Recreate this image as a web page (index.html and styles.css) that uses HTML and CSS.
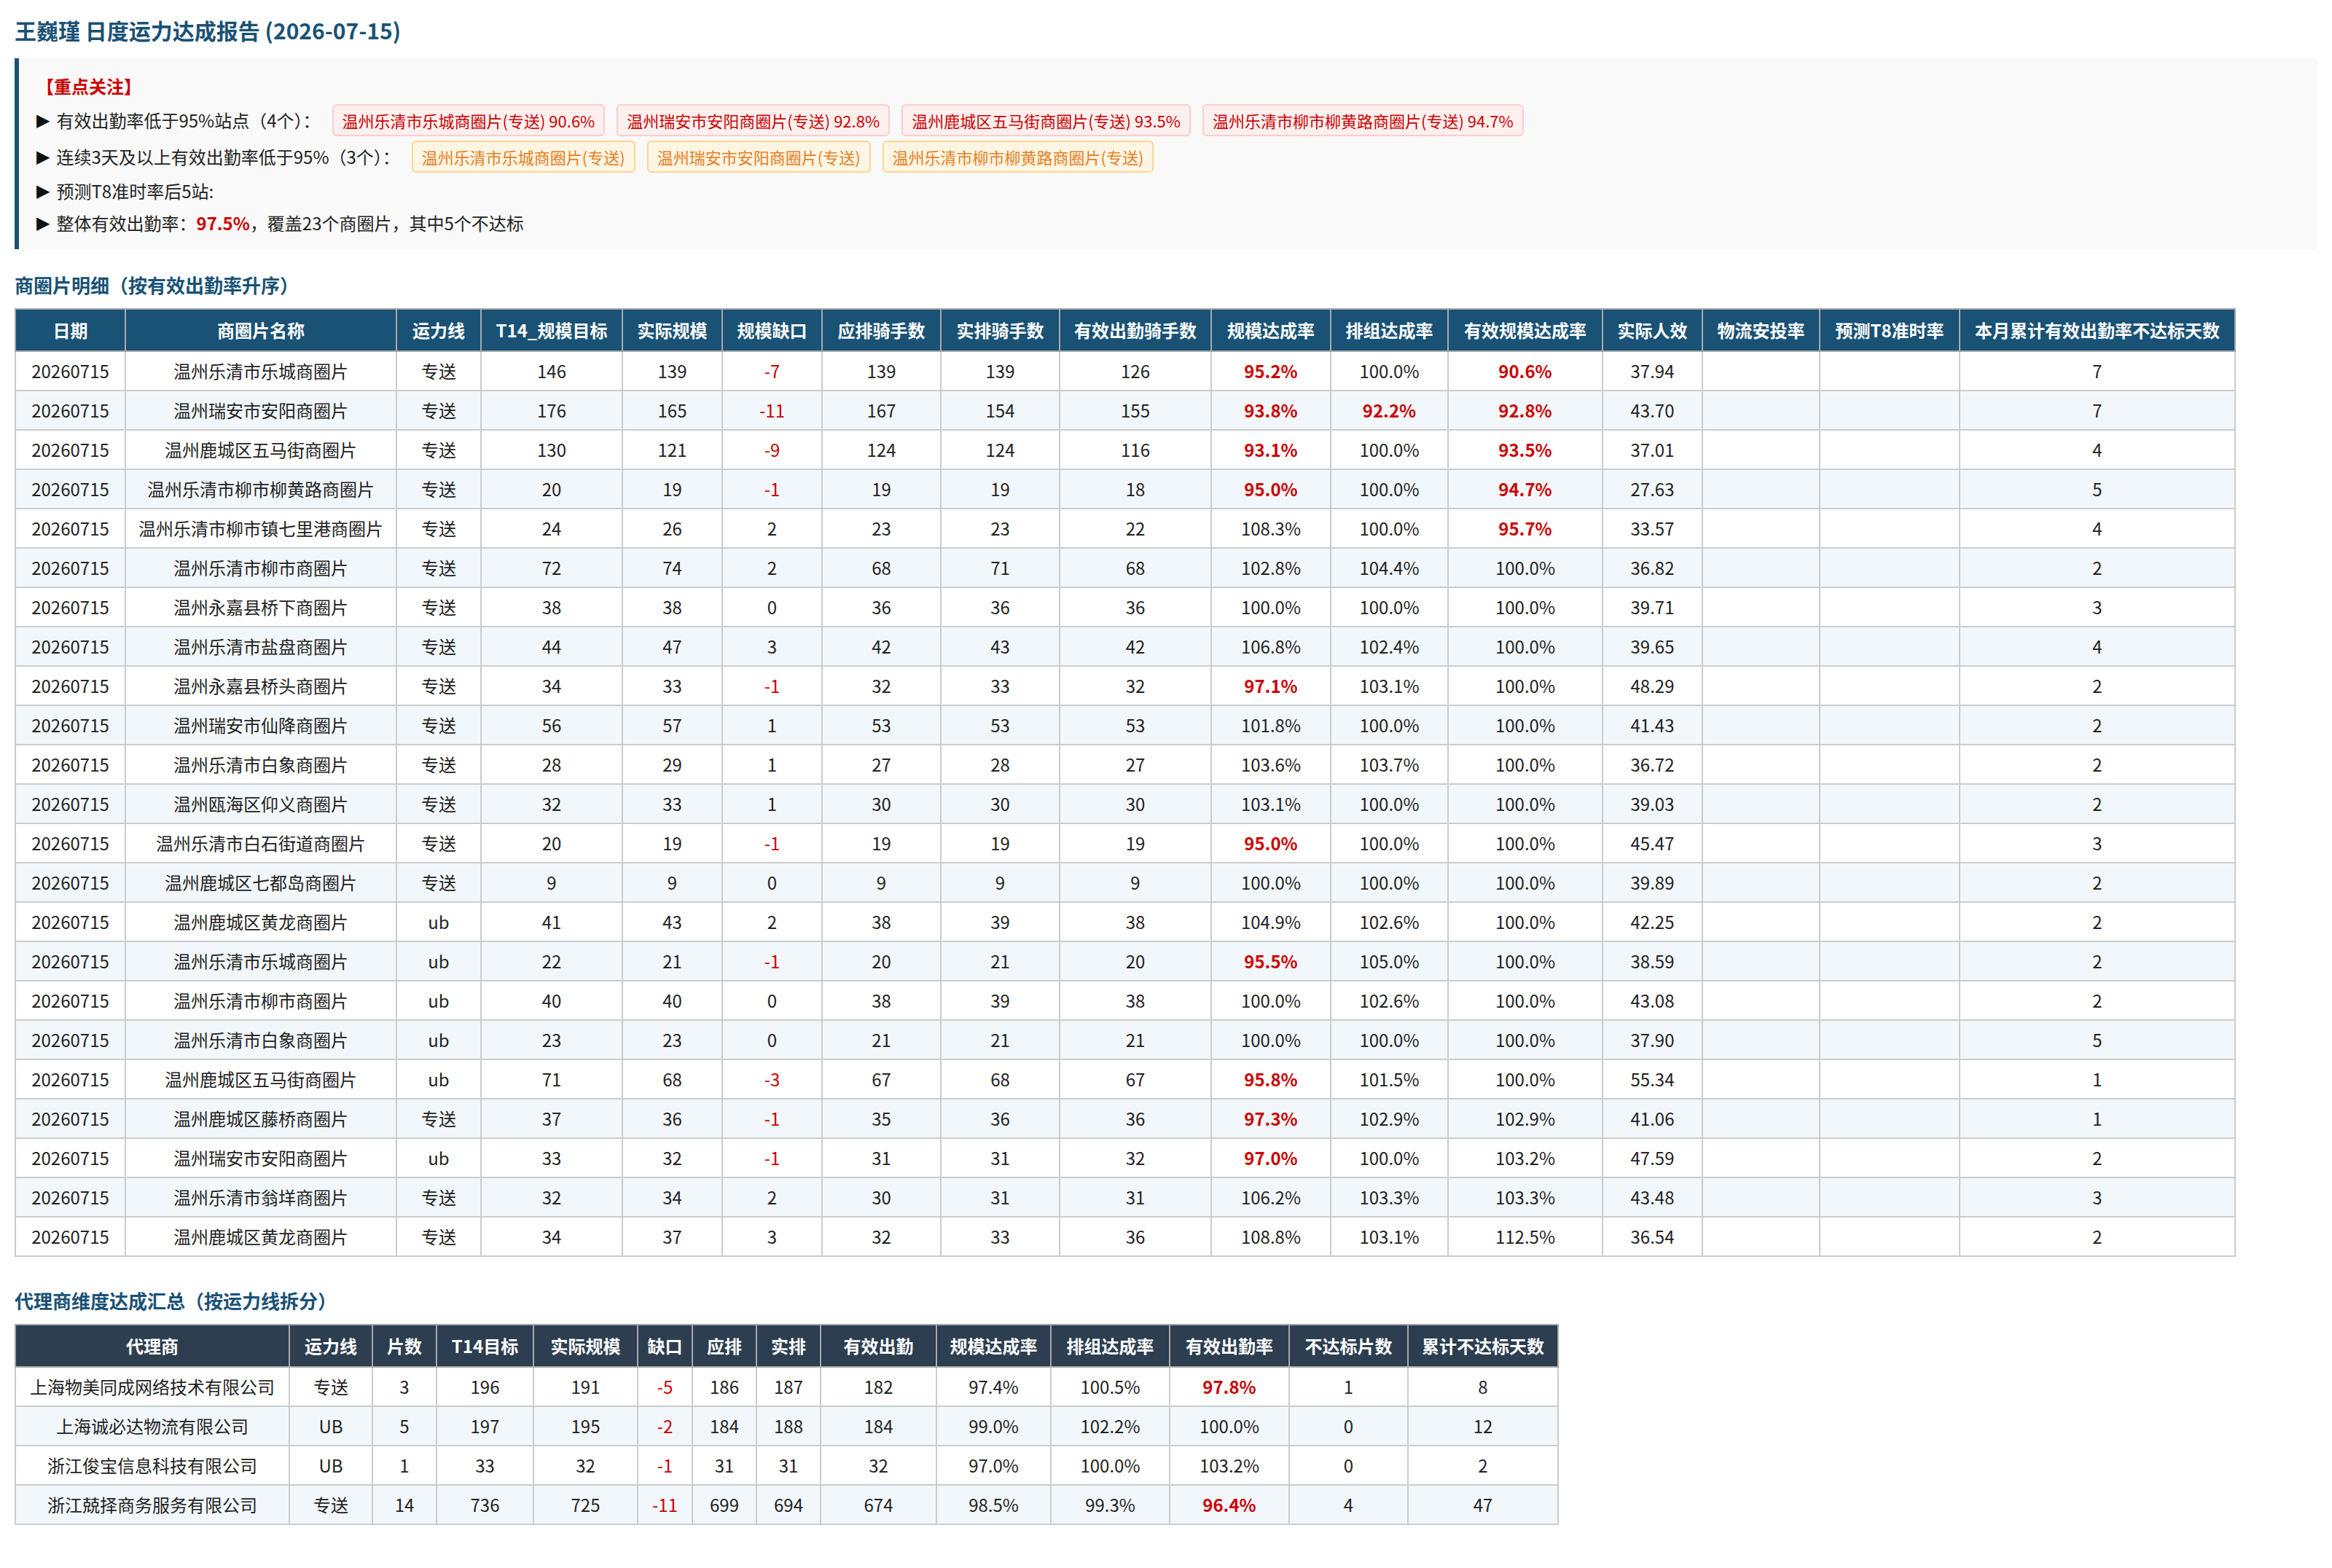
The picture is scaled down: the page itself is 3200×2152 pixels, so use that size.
FILE: index.html
```html
<!DOCTYPE html>
<html lang="zh-CN">
<head>
<meta charset="utf-8">
<title>王巍瑾 日度运力达成报告</title>
<link rel="stylesheet" href="styles.css">
</head>
<body>
<h1 class="title">王巍瑾 日度运力达成报告 (2026-07-15)</h1>

<div class="keybox">
  <div class="key-head">【重点关注】</div>
  <div class="key-line"><span class="arrow">▶</span><span class="label">有效出勤率低于95%站点（4个）：</span><span class="badge red">温州乐清市乐城商圈片(专送) 90.6%</span><span class="badge red">温州瑞安市安阳商圈片(专送) 92.8%</span><span class="badge red">温州鹿城区五马街商圈片(专送) 93.5%</span><span class="badge red">温州乐清市柳市柳黄路商圈片(专送) 94.7%</span></div>
  <div class="key-line"><span class="arrow">▶</span><span class="label">连续3天及以上有效出勤率低于95%（3个）：</span><span class="badge orange">温州乐清市乐城商圈片(专送)</span><span class="badge orange">温州瑞安市安阳商圈片(专送)</span><span class="badge orange">温州乐清市柳市柳黄路商圈片(专送)</span></div>
  <div class="key-line"><span class="arrow">▶</span><span class="label">预测T8准时率后5站:</span></div>
  <div class="key-line"><span class="arrow">▶</span><span class="label">整体有效出勤率：<b class="hl">97.5%</b>，覆盖23个商圈片，其中5个不达标</span></div>
</div>

<h2 class="section">商圈片明细（按有效出勤率升序）</h2>
<table class="grid detail">
  <colgroup>
    <col><col><col><col><col><col><col><col><col><col><col><col><col><col><col><col>
  </colgroup>
  <thead>
    <tr><th>日期</th><th>商圈片名称</th><th>运力线</th><th>T14_规模目标</th><th>实际规模</th><th>规模缺口</th><th>应排骑手数</th><th>实排骑手数</th><th>有效出勤骑手数</th><th>规模达成率</th><th>排组达成率</th><th>有效规模达成率</th><th>实际人效</th><th>物流安投率</th><th>预测T8准时率</th><th>本月累计有效出勤率不达标天数</th></tr>
  </thead>
  <tbody>
    <tr><td>20260715</td><td>温州乐清市乐城商圈片</td><td>专送</td><td>146</td><td>139</td><td class="neg">-7</td><td>139</td><td>139</td><td>126</td><td class="bad">95.2%</td><td>100.0%</td><td class="bad">90.6%</td><td>37.94</td><td></td><td></td><td>7</td></tr>
    <tr><td>20260715</td><td>温州瑞安市安阳商圈片</td><td>专送</td><td>176</td><td>165</td><td class="neg">-11</td><td>167</td><td>154</td><td>155</td><td class="bad">93.8%</td><td class="bad">92.2%</td><td class="bad">92.8%</td><td>43.70</td><td></td><td></td><td>7</td></tr>
    <tr><td>20260715</td><td>温州鹿城区五马街商圈片</td><td>专送</td><td>130</td><td>121</td><td class="neg">-9</td><td>124</td><td>124</td><td>116</td><td class="bad">93.1%</td><td>100.0%</td><td class="bad">93.5%</td><td>37.01</td><td></td><td></td><td>4</td></tr>
    <tr><td>20260715</td><td>温州乐清市柳市柳黄路商圈片</td><td>专送</td><td>20</td><td>19</td><td class="neg">-1</td><td>19</td><td>19</td><td>18</td><td class="bad">95.0%</td><td>100.0%</td><td class="bad">94.7%</td><td>27.63</td><td></td><td></td><td>5</td></tr>
    <tr><td>20260715</td><td>温州乐清市柳市镇七里港商圈片</td><td>专送</td><td>24</td><td>26</td><td>2</td><td>23</td><td>23</td><td>22</td><td>108.3%</td><td>100.0%</td><td class="bad">95.7%</td><td>33.57</td><td></td><td></td><td>4</td></tr>
    <tr><td>20260715</td><td>温州乐清市柳市商圈片</td><td>专送</td><td>72</td><td>74</td><td>2</td><td>68</td><td>71</td><td>68</td><td>102.8%</td><td>104.4%</td><td>100.0%</td><td>36.82</td><td></td><td></td><td>2</td></tr>
    <tr><td>20260715</td><td>温州永嘉县桥下商圈片</td><td>专送</td><td>38</td><td>38</td><td>0</td><td>36</td><td>36</td><td>36</td><td>100.0%</td><td>100.0%</td><td>100.0%</td><td>39.71</td><td></td><td></td><td>3</td></tr>
    <tr><td>20260715</td><td>温州乐清市盐盘商圈片</td><td>专送</td><td>44</td><td>47</td><td>3</td><td>42</td><td>43</td><td>42</td><td>106.8%</td><td>102.4%</td><td>100.0%</td><td>39.65</td><td></td><td></td><td>4</td></tr>
    <tr><td>20260715</td><td>温州永嘉县桥头商圈片</td><td>专送</td><td>34</td><td>33</td><td class="neg">-1</td><td>32</td><td>33</td><td>32</td><td class="bad">97.1%</td><td>103.1%</td><td>100.0%</td><td>48.29</td><td></td><td></td><td>2</td></tr>
    <tr><td>20260715</td><td>温州瑞安市仙降商圈片</td><td>专送</td><td>56</td><td>57</td><td>1</td><td>53</td><td>53</td><td>53</td><td>101.8%</td><td>100.0%</td><td>100.0%</td><td>41.43</td><td></td><td></td><td>2</td></tr>
    <tr><td>20260715</td><td>温州乐清市白象商圈片</td><td>专送</td><td>28</td><td>29</td><td>1</td><td>27</td><td>28</td><td>27</td><td>103.6%</td><td>103.7%</td><td>100.0%</td><td>36.72</td><td></td><td></td><td>2</td></tr>
    <tr><td>20260715</td><td>温州瓯海区仰义商圈片</td><td>专送</td><td>32</td><td>33</td><td>1</td><td>30</td><td>30</td><td>30</td><td>103.1%</td><td>100.0%</td><td>100.0%</td><td>39.03</td><td></td><td></td><td>2</td></tr>
    <tr><td>20260715</td><td>温州乐清市白石街道商圈片</td><td>专送</td><td>20</td><td>19</td><td class="neg">-1</td><td>19</td><td>19</td><td>19</td><td class="bad">95.0%</td><td>100.0%</td><td>100.0%</td><td>45.47</td><td></td><td></td><td>3</td></tr>
    <tr><td>20260715</td><td>温州鹿城区七都岛商圈片</td><td>专送</td><td>9</td><td>9</td><td>0</td><td>9</td><td>9</td><td>9</td><td>100.0%</td><td>100.0%</td><td>100.0%</td><td>39.89</td><td></td><td></td><td>2</td></tr>
    <tr><td>20260715</td><td>温州鹿城区黄龙商圈片</td><td>ub</td><td>41</td><td>43</td><td>2</td><td>38</td><td>39</td><td>38</td><td>104.9%</td><td>102.6%</td><td>100.0%</td><td>42.25</td><td></td><td></td><td>2</td></tr>
    <tr><td>20260715</td><td>温州乐清市乐城商圈片</td><td>ub</td><td>22</td><td>21</td><td class="neg">-1</td><td>20</td><td>21</td><td>20</td><td class="bad">95.5%</td><td>105.0%</td><td>100.0%</td><td>38.59</td><td></td><td></td><td>2</td></tr>
    <tr><td>20260715</td><td>温州乐清市柳市商圈片</td><td>ub</td><td>40</td><td>40</td><td>0</td><td>38</td><td>39</td><td>38</td><td>100.0%</td><td>102.6%</td><td>100.0%</td><td>43.08</td><td></td><td></td><td>2</td></tr>
    <tr><td>20260715</td><td>温州乐清市白象商圈片</td><td>ub</td><td>23</td><td>23</td><td>0</td><td>21</td><td>21</td><td>21</td><td>100.0%</td><td>100.0%</td><td>100.0%</td><td>37.90</td><td></td><td></td><td>5</td></tr>
    <tr><td>20260715</td><td>温州鹿城区五马街商圈片</td><td>ub</td><td>71</td><td>68</td><td class="neg">-3</td><td>67</td><td>68</td><td>67</td><td class="bad">95.8%</td><td>101.5%</td><td>100.0%</td><td>55.34</td><td></td><td></td><td>1</td></tr>
    <tr><td>20260715</td><td>温州鹿城区藤桥商圈片</td><td>专送</td><td>37</td><td>36</td><td class="neg">-1</td><td>35</td><td>36</td><td>36</td><td class="bad">97.3%</td><td>102.9%</td><td>102.9%</td><td>41.06</td><td></td><td></td><td>1</td></tr>
    <tr><td>20260715</td><td>温州瑞安市安阳商圈片</td><td>ub</td><td>33</td><td>32</td><td class="neg">-1</td><td>31</td><td>31</td><td>32</td><td class="bad">97.0%</td><td>100.0%</td><td>103.2%</td><td>47.59</td><td></td><td></td><td>2</td></tr>
    <tr><td>20260715</td><td>温州乐清市翁垟商圈片</td><td>专送</td><td>32</td><td>34</td><td>2</td><td>30</td><td>31</td><td>31</td><td>106.2%</td><td>103.3%</td><td>103.3%</td><td>43.48</td><td></td><td></td><td>3</td></tr>
    <tr><td>20260715</td><td>温州鹿城区黄龙商圈片</td><td>专送</td><td>34</td><td>37</td><td>3</td><td>32</td><td>33</td><td>36</td><td>108.8%</td><td>103.1%</td><td>112.5%</td><td>36.54</td><td></td><td></td><td>2</td></tr>
  </tbody>
</table>

<h2 class="section">代理商维度达成汇总（按运力线拆分）</h2>
<table class="grid agent">
  <colgroup>
    <col><col><col><col><col><col><col><col><col><col><col><col><col><col>
  </colgroup>
  <thead>
    <tr><th>代理商</th><th>运力线</th><th>片数</th><th>T14目标</th><th>实际规模</th><th>缺口</th><th>应排</th><th>实排</th><th>有效出勤</th><th>规模达成率</th><th>排组达成率</th><th>有效出勤率</th><th>不达标片数</th><th>累计不达标天数</th></tr>
  </thead>
  <tbody>
    <tr><td>上海物美同成网络技术有限公司</td><td>专送</td><td>3</td><td>196</td><td>191</td><td class="neg">-5</td><td>186</td><td>187</td><td>182</td><td>97.4%</td><td>100.5%</td><td class="bad">97.8%</td><td>1</td><td>8</td></tr>
    <tr><td>上海诚必达物流有限公司</td><td>UB</td><td>5</td><td>197</td><td>195</td><td class="neg">-2</td><td>184</td><td>188</td><td>184</td><td>99.0%</td><td>102.2%</td><td>100.0%</td><td>0</td><td>12</td></tr>
    <tr><td>浙江俊宝信息科技有限公司</td><td>UB</td><td>1</td><td>33</td><td>32</td><td class="neg">-1</td><td>31</td><td>31</td><td>32</td><td>97.0%</td><td>100.0%</td><td>103.2%</td><td>0</td><td>2</td></tr>
    <tr><td>浙江兢择商务服务有限公司</td><td>专送</td><td>14</td><td>736</td><td>725</td><td class="neg">-11</td><td>699</td><td>694</td><td>674</td><td>98.5%</td><td>99.3%</td><td class="bad">96.4%</td><td>4</td><td>47</td></tr>
  </tbody>
</table>
</body>
</html>
```

FILE: styles.css
```css
html, body {
  background: #ffffff;
}
body {
  margin: 20px;
  font-family: "Noto Sans CJK SC", "Noto Sans", sans-serif;
  color: #222222;
  font-size: 24px;
}

.title {
  margin: 0 0 18px 0;
  font-size: 30px;
  line-height: 42px;
  font-weight: bold;
  color: #1a5276;
}

.keybox {
  display: flex;
  flex-direction: column;
  gap: 6px;
  background: #f9f9f9;
  border-left: 6px solid #1a5276;
  padding: 19px 24px 17px 24px;
}
.key-head {
  color: #cc0000;
  font-weight: bold;
  font-size: 24px;
  line-height: 38px;
}
.key-line {
  display: flex;
  align-items: center;
  flex-wrap: wrap;
  line-height: 38px;
  font-size: 24px;
  color: #222222;
}
.arrow {
  font-family: "DejaVu Sans", sans-serif;
  font-size: 24px;
  margin-right: 9px;
  color: #111111;
}
.label {
  margin-right: 8px;
}
.label .hl {
  color: #cc0000;
  font-weight: bold;
}
.badge {
  display: inline-block;
  font-size: 22px;
  line-height: 32px;
  padding: 4px 12px;
  border-radius: 6px;
  border: 2px solid transparent;
  margin: 0 8px;
}
.badge.red {
  color: #cc0000;
  background: #fff0f0;
  border-color: #ffcccc;
}
.badge.orange {
  color: #e67e22;
  background: #fff5e3;
  border-color: #ffd591;
}

.section {
  margin: 30px 0 13px 0;
  font-size: 26px;
  line-height: 38px;
  font-weight: bold;
  color: #1a5276;
}

.grid {
  border-collapse: collapse;
  table-layout: fixed;
  font-size: 24px;
}
.grid th, .grid td {
  text-align: center;
  white-space: nowrap;
  overflow: hidden;
  padding: 8px 6px;
  line-height: 36px;
  border: 2px solid #cccccc;
}
.grid th {
  color: #ffffff;
  font-weight: bold;
  padding-top: 10px;
  padding-bottom: 10px;
  border-color: #a8a8a8;
}
.grid tbody tr:nth-child(even) td {
  background: #f2f7fb;
}
.grid td.neg {
  color: #cc0000;
}
.grid td.bad {
  color: #cc0000;
  font-weight: bold;
}

.detail {
  width: 3046px;
  margin-bottom: 41px;
}
.detail th {
  background: #1a5276;
}
.detail col:nth-child(1) { width: 151px; }
.detail col:nth-child(2) { width: 372px; }
.detail col:nth-child(3) { width: 116px; }
.detail col:nth-child(4) { width: 194px; }
.detail col:nth-child(5) { width: 137px; }
.detail col:nth-child(6) { width: 137px; }
.detail col:nth-child(7) { width: 163px; }
.detail col:nth-child(8) { width: 163px; }
.detail col:nth-child(9) { width: 208px; }
.detail col:nth-child(10) { width: 164px; }
.detail col:nth-child(11) { width: 161px; }
.detail col:nth-child(12) { width: 212px; }
.detail col:nth-child(13) { width: 137px; }
.detail col:nth-child(14) { width: 161px; }
.detail col:nth-child(15) { width: 192px; }
.detail col:nth-child(16) { width: 378px; }

.agent {
  width: 2117px;
}
.agent th {
  background: #2c3e50;
}
.agent col:nth-child(1) { width: 376px; }
.agent col:nth-child(2) { width: 114px; }
.agent col:nth-child(3) { width: 88px; }
.agent col:nth-child(4) { width: 133px; }
.agent col:nth-child(5) { width: 143px; }
.agent col:nth-child(6) { width: 75px; }
.agent col:nth-child(7) { width: 88px; }
.agent col:nth-child(8) { width: 88px; }
.agent col:nth-child(9) { width: 159px; }
.agent col:nth-child(10) { width: 157px; }
.agent col:nth-child(11) { width: 163px; }
.agent col:nth-child(12) { width: 164px; }
.agent col:nth-child(13) { width: 163px; }
.agent col:nth-child(14) { width: 206px; }
```
